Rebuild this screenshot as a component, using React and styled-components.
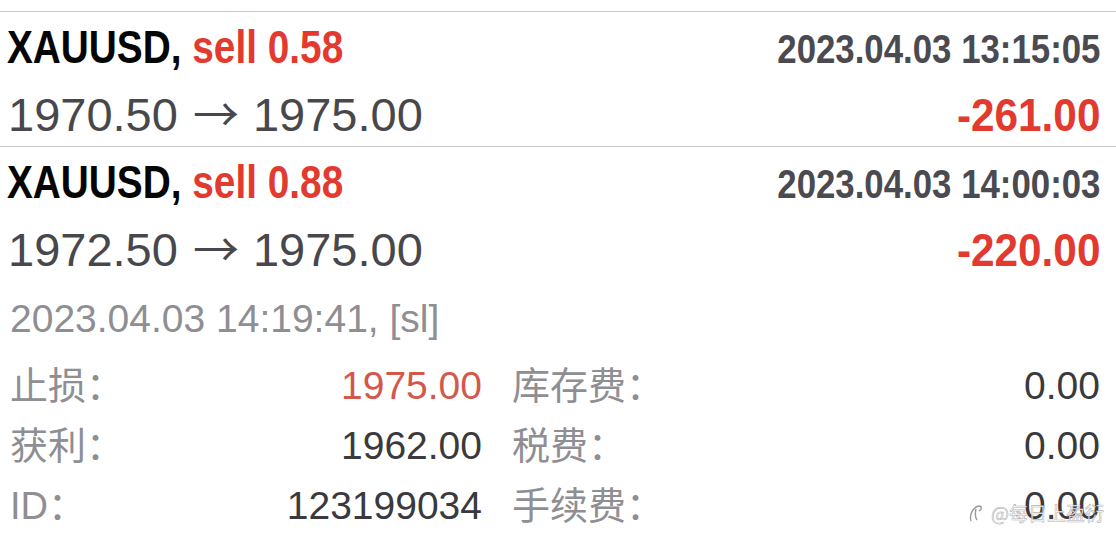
import React from 'react';
import styled, { createGlobalStyle } from 'styled-components';

const GlobalStyle = createGlobalStyle`
  html, body {
    margin: 0;
    padding: 0;
    background: #ffffff;
  }
  body {
    font-family: "Liberation Sans", Arial, sans-serif;
    -webkit-font-smoothing: antialiased;
  }
`;

const Page = styled.div`
  position: relative;
  width: 1116px;
  height: 546px;
  padding-top: 11px;
  box-sizing: border-box;
  overflow: hidden;
`;

const DealRow = styled.div`
  border-top: 1px solid #c8c8cc;
  padding: 3px 16px 3px 7px;
`;

const Line = styled.div`
  display: flex;
  justify-content: space-between;
  align-items: baseline;
  height: 64px;
  line-height: 64px;
  white-space: nowrap;
`;

// the app uses a condensed bold face; squeeze the bold sans to match it
const Condensed = styled.span`
  display: inline-block;
  font-weight: 700;
  transform: scaleX(${(p) => p.$squeeze});
  transform-origin: ${(p) => (p.$right ? 'right' : 'left')} center;
`;

const Symbol = styled(Condensed)`
  font-size: 47px;
  color: #050505;
`;

const Side = styled.span`
  color: #e23a2f;
`;

const OpenTime = styled(Condensed)`
  font-size: 40px;
  color: #4a4a50;
`;

const Profit = styled(Condensed)`
  font-size: 47px;
  color: #e23a2f;
`;

const Prices = styled.span`
  font-size: 47px;
  color: #48484c;
  padding-left: 1px;
`;

const Arrow = styled.span`
  font-family: "Noto Sans CJK SC", sans-serif;
  font-size: 46px;
  margin: 0 14px 0 15px;
`;

const Details = styled.div`
  padding: 8px 16px 0 10px;
`;

const CloseInfo = styled.div`
  font-size: 39px;
  line-height: 60px;
  color: #8e8e93;
  margin-bottom: 7px;
  white-space: nowrap;
`;

const Grid = styled.div`
  display: grid;
  grid-template-columns: 472px 1fr;
  column-gap: 30px;
`;

const Pair = styled.div`
  display: flex;
  justify-content: space-between;
  align-items: baseline;
  line-height: 60px;
  white-space: nowrap;
`;

const Label = styled.span`
  font-family: "Liberation Sans", "Noto Sans CJK SC", sans-serif;
  font-size: 38px;
  color: #8e8e93;
`;

const Value = styled.span`
  font-size: 39px;
  color: ${(p) => (p.$red ? '#d4574c' : '#3a3a3e')};
`;

const Watermark = styled.div`
  position: absolute;
  right: 12px;
  bottom: 20px;
  display: flex;
  align-items: center;
  gap: 6px;
  font-family: "Noto Sans CJK SC", sans-serif;
  font-size: 19px;
  color: rgba(255, 255, 255, 0.85);
  -webkit-text-stroke: 0.6px rgba(120, 120, 120, 0.6);
`;

const deals = [
  { lot: '0.58', open: '1970.50', close: '1975.00', time: '2023.04.03 13:15:05', profit: '-261.00' },
  { lot: '0.88', open: '1972.50', close: '1975.00', time: '2023.04.03 14:00:03', profit: '-220.00' },
];

const details = [
  ['止损：', '1975.00', true, '库存费：', '0.00'],
  ['获利：', '1962.00', false, '税费：', '0.00'],
  ['ID：', '123199034', false, '手续费：', '0.00'],
];

export default function App() {
  return (
    <>
      <GlobalStyle />
      <Page>
        {deals.map((d) => (
          <DealRow key={d.time}>
            <Line>
              <Symbol $squeeze={0.825}>
                XAUUSD, <Side>sell {d.lot}</Side>
              </Symbol>
              <OpenTime $squeeze={0.87} $right>
                {d.time}
              </OpenTime>
            </Line>
            <Line>
              <Prices>
                {d.open}
                <Arrow>→</Arrow>
                {d.close}
              </Prices>
              <Profit $squeeze={0.9} $right>
                {d.profit}
              </Profit>
            </Line>
          </DealRow>
        ))}
        <Details>
          <CloseInfo>2023.04.03 14:19:41, [sl]</CloseInfo>
          <Grid>
            {details.map(([l1, v1, red, l2, v2]) => (
              <React.Fragment key={l1}>
                <Pair>
                  <Label>{l1}</Label>
                  <Value $red={red}>{v1}</Value>
                </Pair>
                <Pair>
                  <Label>{l2}</Label>
                  <Value>{v2}</Value>
                </Pair>
              </React.Fragment>
            ))}
          </Grid>
        </Details>
        <Watermark>
          <svg width="18" height="20" viewBox="0 0 18 20" fill="none" stroke="rgba(110,110,110,0.7)" strokeWidth="1.4">
            <path d="M4 18 C2 12 6 4 12 3 C15 3 15 7 12 8" />
            <path d="M9 6 C8 10 8 14 10 17" />
          </svg>
          <span>@每日上盈衍</span>
        </Watermark>
      </Page>
    </>
  );
}
